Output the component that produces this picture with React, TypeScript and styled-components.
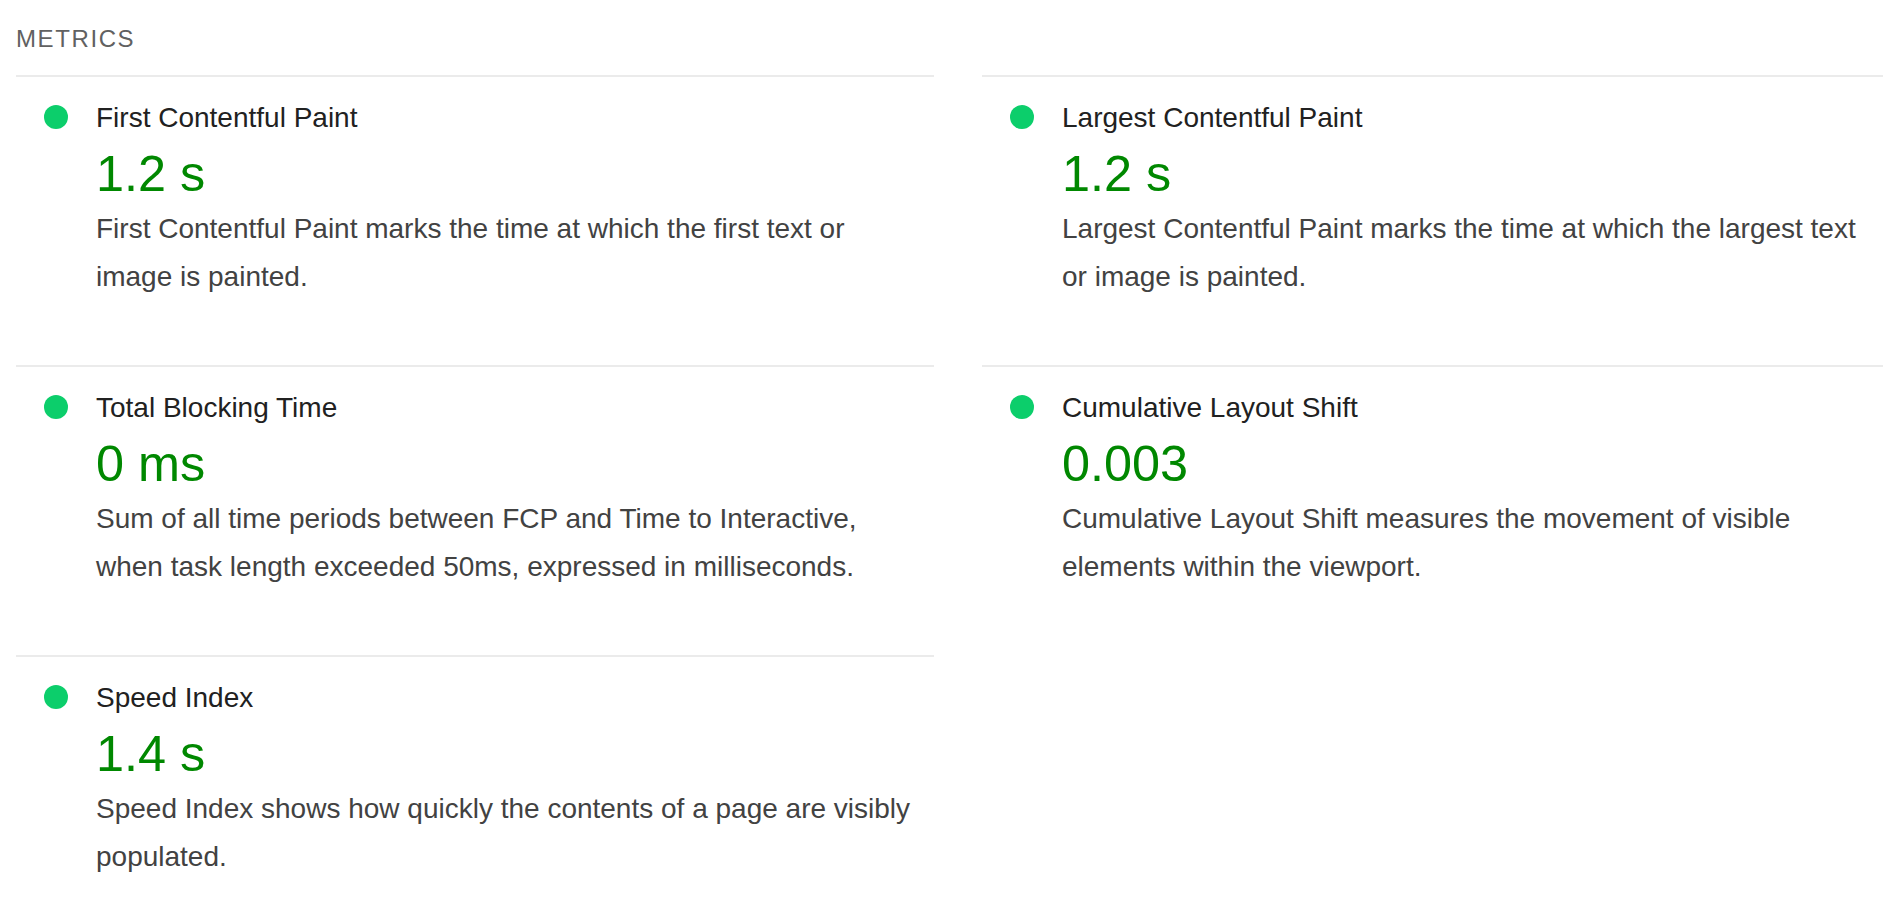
import React from "react";
import styled, { createGlobalStyle } from "styled-components";

const GlobalStyle = createGlobalStyle`
  html, body {
    margin: 0;
    padding: 0;
    background: #ffffff;
    overflow: hidden;
  }
  body {
    font-family: "Liberation Sans", Arial, sans-serif;
    -webkit-font-smoothing: antialiased;
  }
`;

const Page = styled.div`
  padding: 25px 16px 0;
  width: max-content;
`;

const Header = styled.h2`
  margin: 0 0 22px;
  font-size: 24px;
  line-height: 28px;
  font-weight: 400;
  letter-spacing: 1.6px;
  text-transform: uppercase;
  color: #616161;
`;

const MetricsGrid = styled.div`
  display: grid;
  grid-template-columns: 918px 918px;
  column-gap: 48px;
`;

const Metric = styled.div`
  display: grid;
  grid-template-columns: 80px 1fr;
  border-top: 2px solid #ebebeb;
  padding: 17px 14px 64px 0;
`;

const Dot = styled.span<{ $color: string }>`
  display: block;
  width: 24px;
  height: 24px;
  margin: 11px 0 0 28px;
  border-radius: 50%;
  background: ${(p) => p.$color};
`;

const Body = styled.div`
  display: flex;
  flex-direction: column;
`;

const Title = styled.div`
  font-size: 28px;
  line-height: 48px;
  color: #212121;
`;

const Value = styled.div<{ $color: string }>`
  font-size: 50.4px;
  line-height: 63px;
  color: ${(p) => p.$color};
  white-space: nowrap;
`;

const Description = styled.div`
  font-size: 28px;
  line-height: 48px;
  color: #424242;
`;

type MetricData = {
  title: string;
  value: string;
  description: string;
};

const metrics: MetricData[] = [
  {
    title: "First Contentful Paint",
    value: "1.2 s",
    description:
      "First Contentful Paint marks the time at which the first text or image is painted.",
  },
  {
    title: "Largest Contentful Paint",
    value: "1.2 s",
    description:
      "Largest Contentful Paint marks the time at which the largest text or image is painted.",
  },
  {
    title: "Total Blocking Time",
    value: "0 ms",
    description:
      "Sum of all time periods between FCP and Time to Interactive, when task length exceeded 50ms, expressed in milliseconds.",
  },
  {
    title: "Cumulative Layout Shift",
    value: "0.003",
    description:
      "Cumulative Layout Shift measures the movement of visible elements within the viewport.",
  },
  {
    title: "Speed Index",
    value: "1.4 s",
    description:
      "Speed Index shows how quickly the contents of a page are visibly populated.",
  },
];

export default function App() {
  return (
    <>
      <GlobalStyle />
      <Page>
        <Header>Metrics</Header>
        <MetricsGrid>
          {metrics.map((m) => (
            <Metric key={m.title}>
              <Dot $color="#0cce6b" />
              <Body>
                <Title>{m.title}</Title>
                <Value $color="#008800">{m.value}</Value>
                <Description>{m.description}</Description>
              </Body>
            </Metric>
          ))}
        </MetricsGrid>
      </Page>
    </>
  );
}
